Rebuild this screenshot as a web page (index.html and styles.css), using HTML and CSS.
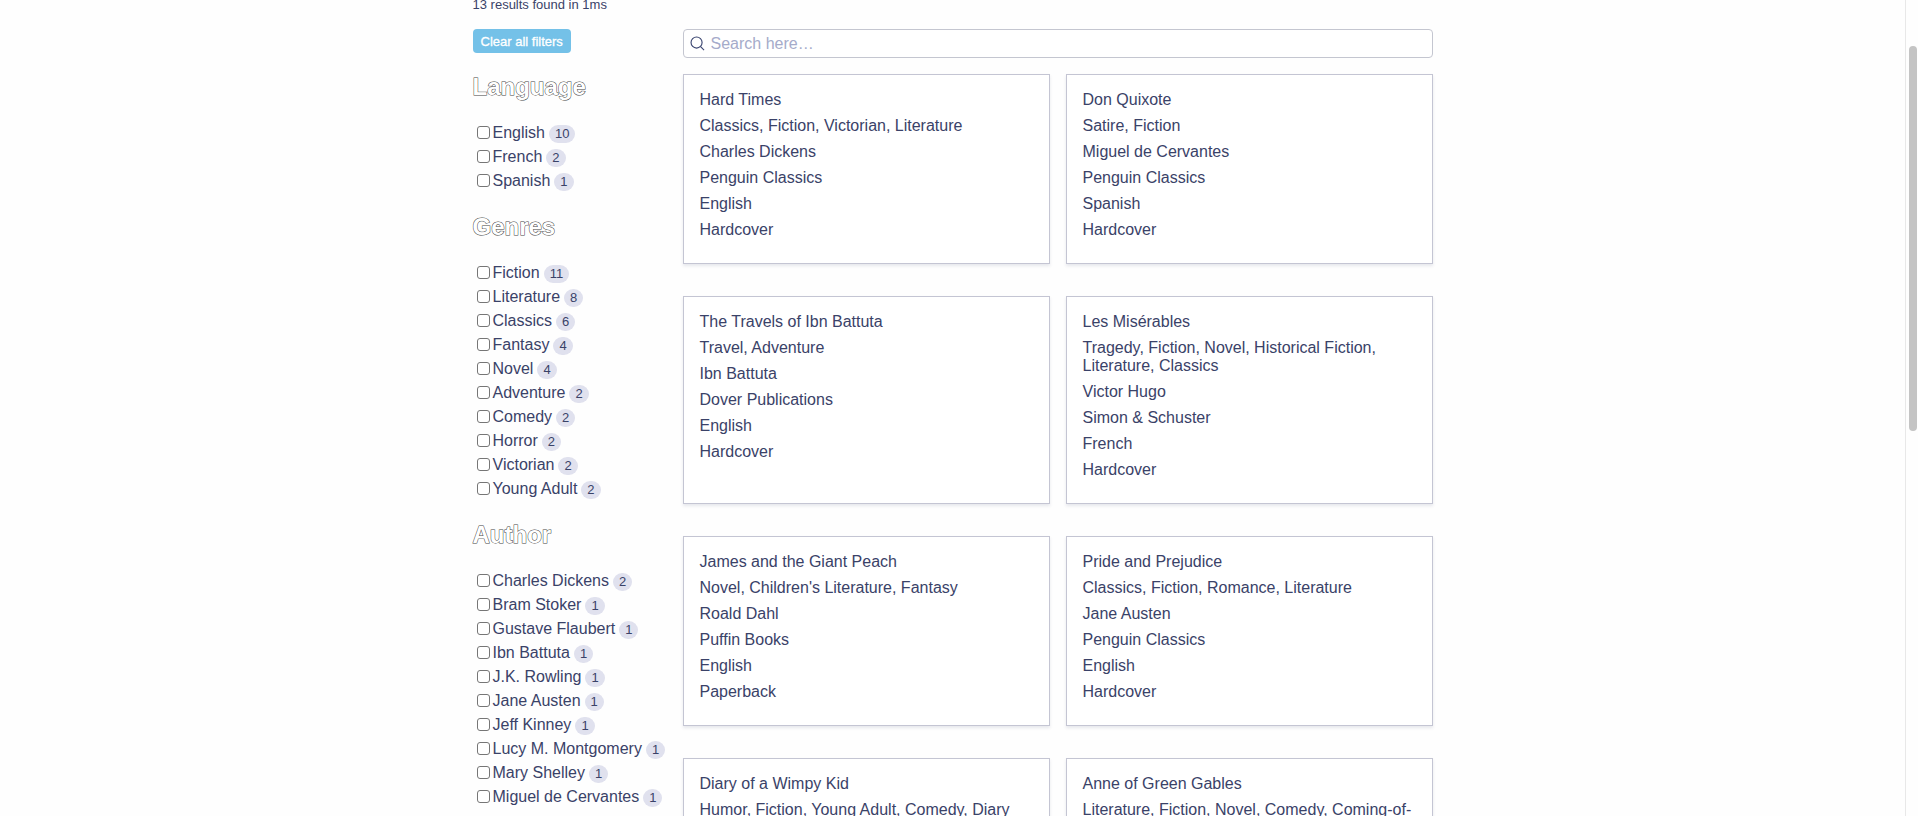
FILE: index.html
```html
<!DOCTYPE html>
<html lang="en">
<head>
<meta charset="utf-8">
<title>Book search</title>
<link rel="stylesheet" href="styles.css">
</head>
<body>
<div class="content">
  <main class="page">
    <p class="stats">13 results found in 1ms</p>
    <div class="columns">
      <aside class="filters">
        <button class="clear" type="button">Clear all filters</button>
        <h2 class="facet-title">Language</h2>
        <ul class="facet">
          <li><label><input type="checkbox">English <span class="count">10</span></label></li>
          <li><label><input type="checkbox">French <span class="count">2</span></label></li>
          <li><label><input type="checkbox">Spanish <span class="count">1</span></label></li>
        </ul>
        <h2 class="facet-title">Genres</h2>
        <ul class="facet">
          <li><label><input type="checkbox">Fiction <span class="count">11</span></label></li>
          <li><label><input type="checkbox">Literature <span class="count">8</span></label></li>
          <li><label><input type="checkbox">Classics <span class="count">6</span></label></li>
          <li><label><input type="checkbox">Fantasy <span class="count">4</span></label></li>
          <li><label><input type="checkbox">Novel <span class="count">4</span></label></li>
          <li><label><input type="checkbox">Adventure <span class="count">2</span></label></li>
          <li><label><input type="checkbox">Comedy <span class="count">2</span></label></li>
          <li><label><input type="checkbox">Horror <span class="count">2</span></label></li>
          <li><label><input type="checkbox">Victorian <span class="count">2</span></label></li>
          <li><label><input type="checkbox">Young Adult <span class="count">2</span></label></li>
        </ul>
        <h2 class="facet-title">Author</h2>
        <ul class="facet">
          <li><label><input type="checkbox">Charles Dickens <span class="count">2</span></label></li>
          <li><label><input type="checkbox">Bram Stoker <span class="count">1</span></label></li>
          <li><label><input type="checkbox">Gustave Flaubert <span class="count">1</span></label></li>
          <li><label><input type="checkbox">Ibn Battuta <span class="count">1</span></label></li>
          <li><label><input type="checkbox">J.K. Rowling <span class="count">1</span></label></li>
          <li><label><input type="checkbox">Jane Austen <span class="count">1</span></label></li>
          <li><label><input type="checkbox">Jeff Kinney <span class="count">1</span></label></li>
          <li><label><input type="checkbox">Lucy M. Montgomery <span class="count">1</span></label></li>
          <li><label><input type="checkbox">Mary Shelley <span class="count">1</span></label></li>
          <li><label><input type="checkbox">Miguel de Cervantes <span class="count">1</span></label></li>
        </ul>
      </aside>
      <section class="results">
        <form class="search">
          <svg class="search-icon" viewBox="0 0 16 16" aria-hidden="true"><circle cx="7" cy="7" r="5.9"/><path d="M11.3 11.3 15 15"/></svg>
          <input class="search-input" type="search" placeholder="Search here…" aria-label="Search books">
        </form>
        <div class="cards">
          <article class="card"><p>Hard Times</p><p>Classics, Fiction, Victorian, Literature</p><p>Charles Dickens</p><p>Penguin Classics</p><p>English</p><p>Hardcover</p></article>
          <article class="card"><p>Don Quixote</p><p>Satire, Fiction</p><p>Miguel de Cervantes</p><p>Penguin Classics</p><p>Spanish</p><p>Hardcover</p></article>
          <article class="card"><p>The Travels of Ibn Battuta</p><p>Travel, Adventure</p><p>Ibn Battuta</p><p>Dover Publications</p><p>English</p><p>Hardcover</p></article>
          <article class="card"><p>Les Misérables</p><p>Tragedy, Fiction, Novel, Historical Fiction, Literature, Classics</p><p>Victor Hugo</p><p>Simon &amp; Schuster</p><p>French</p><p>Hardcover</p></article>
          <article class="card"><p>James and the Giant Peach</p><p>Novel, Children's Literature, Fantasy</p><p>Roald Dahl</p><p>Puffin Books</p><p>English</p><p>Paperback</p></article>
          <article class="card"><p>Pride and Prejudice</p><p>Classics, Fiction, Romance, Literature</p><p>Jane Austen</p><p>Penguin Classics</p><p>English</p><p>Hardcover</p></article>
          <article class="card"><p>Diary of a Wimpy Kid</p><p>Humor, Fiction, Young Adult, Comedy, Diary</p></article>
          <article class="card"><p>Anne of Green Gables</p><p>Literature, Fiction, Novel, Comedy, Coming-of-Age</p></article>
        </div>
      </section>
    </div>
  </main>
</div>
<div class="scroll-track" aria-hidden="true"><div class="scroll-thumb"></div></div>
</body>
</html>
```
FILE: styles.css
```css
* {
  box-sizing: border-box;
}

body {
  display: flex;
  height: 100vh;
  margin: 0;
  overflow: hidden;
  background: #fefefe;
  color: #3a4268;
  font: 16px/18px "Liberation Sans", Arial, sans-serif;
}

.content {
  flex: 1;
  min-width: 0;
}

.page {
  max-width: 960px;
  margin: 0 auto;
}

.stats {
  margin: 0 0 19px;
  font-size: 13px;
  line-height: 10px;
}

.columns {
  display: grid;
  grid-template-columns: 210px 1fr;
}

.clear {
  display: block;
  height: 24px;
  padding: 1px 8px 0;
  border: 0;
  border-radius: 4px;
  background: #74c1e8;
  color: #fff;
  font: 13px/24px "Liberation Sans", Arial, sans-serif;
  -webkit-text-stroke: 0.3px #fff;
}

.facet-title {
  margin: 20px 0;
  color: #fff;
  font-size: 24px;
  line-height: 28px;
  -webkit-text-stroke: 1px #444;
  paint-order: stroke fill;
}

.facet {
  margin: 0;
  padding: 0;
  list-style: none;
}

.facet li {
  height: 24px;
  line-height: 24px;
  white-space: nowrap;
}

.facet label {
  display: flex;
  align-items: center;
}

.facet input {
  appearance: none;
  width: 13px;
  height: 13px;
  margin: 0 3px 2px 4px;
  border: 1px solid #767676;
  border-radius: 3px;
  background: #fff;
}

.count {
  margin: 2px 0 0 4px;
  padding: 0 6px;
  border-radius: 9px;
  background: #e0e1ee;
  font-size: 13px;
  line-height: 18px;
}

.search {
  display: flex;
  align-items: center;
  height: 29px;
  margin: 0 0 16px;
  padding: 0 6px;
  border: 1px solid #c4c6d0;
  border-radius: 4px;
  background: #fff;
}

.search-icon {
  width: 15px;
  height: 15px;
  fill: none;
  stroke: #3a4570;
  stroke-width: 1.2;
}

.search-input {
  flex: 1;
  min-width: 0;
  margin: 0 0 0 6px;
  padding: 0;
  border: 0;
  outline: 0;
  background: none;
  color: inherit;
  font: inherit;
}

.search-input::placeholder {
  color: #a5abca;
}

.cards {
  display: grid;
  grid-template-columns: 1fr 1fr;
  gap: 32px 16px;
}

.card {
  min-height: 190px;
  padding: 16px;
  border: 1px solid #c4c5d3;
  background: #fff;
  box-shadow: 0 2px 3px rgba(58, 66, 104, 0.12);
}

.card p {
  margin: 0 0 8px;
}

.scroll-track {
  width: 13px;
  padding: 46px 1px 0 3px;
  border-left: 1px solid #e8e8e8;
}

.scroll-thumb {
  height: 50%;
  max-height: 387px;
  border-radius: 4px;
  background: #c4c4c4;
}
```
